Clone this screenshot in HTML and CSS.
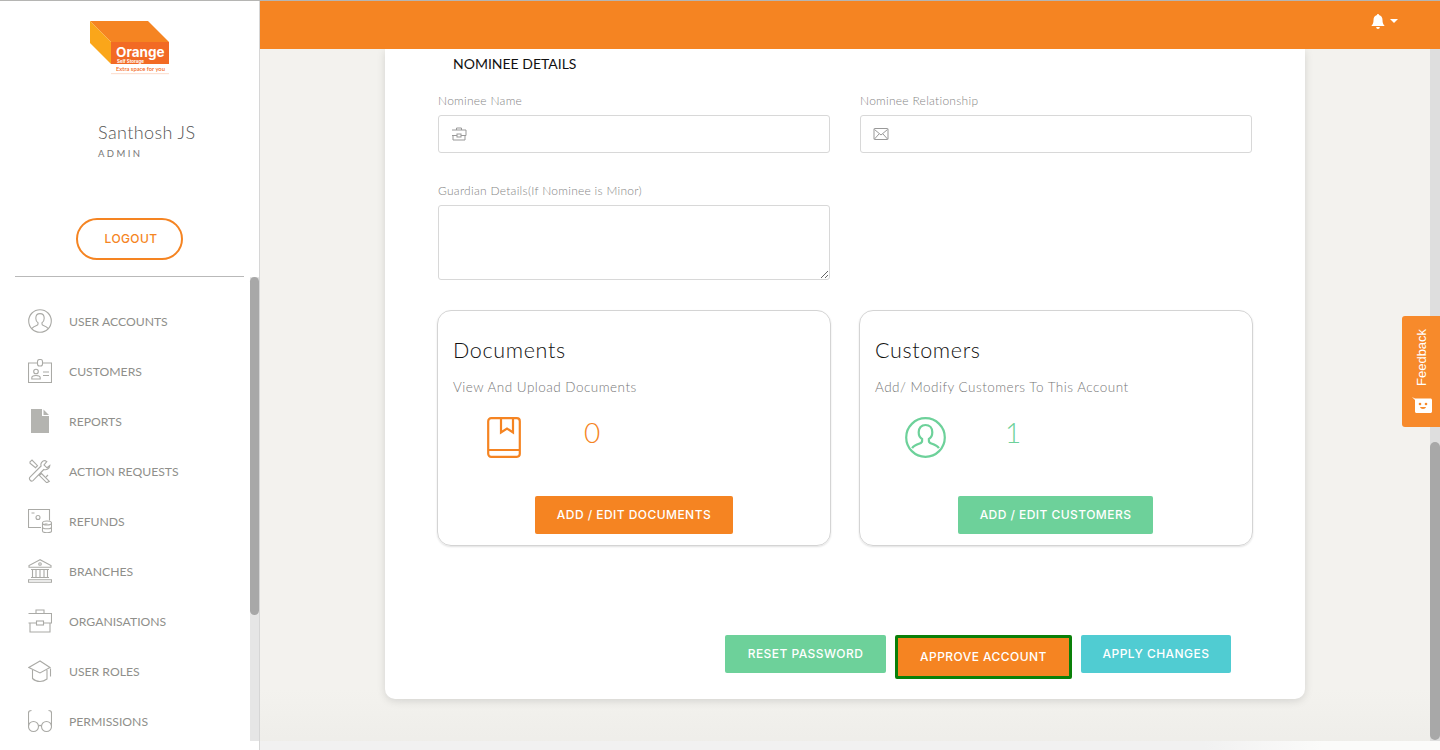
FILE: index.html
```html
<!DOCTYPE html>
<html lang="en">
<head>
<meta charset="utf-8">
<title>Nominee Details</title>
<link rel="stylesheet" href="styles.css">
</head>
<body>
<div class="app">
  <aside class="sidebar">
    <div class="logo">
      <svg width="80" height="54" viewBox="0 0 80 54">
        <polygon points="0,0 58,0 79,21 21,21" fill="#f58422"/>
        <polygon points="0,0 21,21 21,43 0,22" fill="#faa61a"/>
        <rect x="21" y="21" width="58" height="22" fill="#f26a24"/>
        <text x="26" y="35.500" class="logo-main">Orange</text>
        <text x="27" y="41.500" class="logo-sub">Self Storage</text>
        <text x="26" y="50" class="logo-tag">Extra space for you</text>
        <rect x="21" y="52.500" width="58" height="0.600" fill="#f9c3a8"/>
      </svg>
    </div>
    <div class="user">
      <div class="user-name">Santhosh JS</div>
      <div class="user-role">ADMIN</div>
    </div>
    <div class="logout-wrap"><a class="logout">LOGOUT</a></div>
    <hr class="side-rule">
    <nav class="menu">
      <a class="menu-item">
        <svg class="mi" viewBox="0 0 24 24"><circle cx="12" cy="12" r="11.300"/><path d="M12 4.600c-2.600 0-4.200 2-4.200 4.600 0 2 .9 3.700 2.200 4.500v1.300c0 .8-.6 1.200-1.400 1.500-1.700.6-3.600 1.400-4.600 2.900M12 4.600c2.600 0 4.200 2 4.200 4.600 0 2-.9 3.700-2.200 4.500v1.300c0 .8.6 1.200 1.400 1.500 1.700.6 3.600 1.400 4.600 2.900"/></svg>
        <span>USER ACCOUNTS</span>
      </a>
      <a class="menu-item">
        <svg class="mi" viewBox="0 0 24 24"><path d="M9 4H.5v19.500h23V4H15"/><rect x="9.500" y=".5" width="5" height="6.500" rx="2"/><circle cx="8" cy="12.500" r="2.300"/><path d="M3.800 20v-1.200c0-1.500 2-2.300 4.200-2.300s4.200.8 4.200 2.300V20zM15 13h6M15 16.500h6"/></svg>
        <span>CUSTOMERS</span>
      </a>
      <a class="menu-item">
        <svg class="mi" viewBox="0 0 24 24"><path class="solid" d="M3 0h11v7h7v17H3zM15.500 0.500 21 6h-5.500z"/></svg>
        <span>REPORTS</span>
      </a>
      <a class="menu-item">
        <svg class="mi" viewBox="0 0 24 24"><path d="M17 1.500c-2.800.2-4.800 2.800-3.900 5.500L2 18.200c-1.500 1.500.7 5 3 3.400L15.800 10.500c2.800 1 5.700-.9 6-3.900L19 8.800l-3-2.800L18.800 2.700zM2 2.800 4 1l5.500 5.700-2 2L2 4.200zM13.500 14.500l7.800 7.800-2.500 1.500-7.500-7.500z"/><path d="M18 18l2-2"/></svg>
        <span>ACTION REQUESTS</span>
      </a>
      <a class="menu-item">
        <svg class="mi" viewBox="0 0 24 24"><path d="M13 18.500H.5V.5h21v11"/><circle cx="10" cy="8.500" r="2"/><path d="M3.500 4h3M16.500 15h3"/><ellipse cx="19" cy="14" rx="4.500" ry="2"/><path d="M14.500 14v8c0 1 2 1.700 4.500 1.700s4.500-.7 4.500-1.700v-8M14.500 18c0 1 2 1.800 4.500 1.800s4.500-.8 4.500-1.800"/></svg>
        <span>REFUNDS</span>
      </a>
      <a class="menu-item">
        <svg class="mi" viewBox="0 0 24 24"><path d="M12 .7 1 6.500v1.800h22V6.500zM3 10.500h18M4.500 10.500v8M8 10.500v8M12 10.500v8M16 10.500v8M19.500 10.500v8M3 18.500h18M.5 20.800h23v2.500H.5z"/><circle cx="12" cy="5" r="1.300"/></svg>
        <span>BRANCHES</span>
      </a>
      <a class="menu-item">
        <svg class="mi" viewBox="0 0 24 24"><path d="M8 4.500V1h8v3.500M.5 4.500h23v9.500h-8M8.500 14H.5zM2 14v9h20v-9"/><rect x="8.500" y="12" width="7" height="4"/></svg>
        <span>ORGANISATIONS</span>
      </a>
      <a class="menu-item">
        <svg class="mi" viewBox="0 0 24 24"><path d="M12 2 .8 8.500 12 14l10-5.500zM4.500 11v8.500c2 2 5 3 7.500 3s5-1 7-2.500v-9M22.500 9.500v8"/></svg>
        <span>USER ROLES</span>
      </a>
      <a class="menu-item">
        <svg class="mi" viewBox="0 0 24 24"><circle cx="5.500" cy="17.500" r="5"/><circle cx="18.500" cy="17.500" r="5"/><path d="M10.500 17c1-.8 2-.8 3 0M.5 17V4c0-1.500 1-2.500 3-2.500M23.500 17V4c0-1.500-1-2.500-3-2.500"/></svg>
        <span>PERMISSIONS</span>
      </a>
    </nav>
    <div class="side-track"><div class="side-thumb"></div></div>
  </aside>

  <div class="content">
    <header class="topbar">
      <svg class="bell" viewBox="0 0 14 15"><path d="M7 0c.7 0 1 .5 1 1.100C10.300 1.600 11.500 3.500 11.500 6c0 3 .7 4.500 2.200 6H.3c1.500-1.500 2.200-3 2.200-6C2.500 3.500 3.700 1.600 6 1.100 6 .5 6.300 0 7 0zM5.200 13h3.600c0 1.200-.8 2-1.800 2s-1.800-.8-1.800-2z"/></svg>
      <span class="caret"></span>
    </header>
    <main class="stage">
      <section class="panel">
        <h2 class="panel-title">NOMINEE DETAILS</h2>
        <div class="fields">
          <div class="field">
            <label class="field-label">Nominee Name</label>
            <div class="input">
              <svg class="input-icon" viewBox="0 0 16 14"><path d="M5.500 3V1h5v2M1 3h14v5.500h-5M6 8.500H1zM2 8.500V13h12V8.500"/><rect x="6" y="7" width="4" height="3"/></svg>
            </div>
          </div>
          <div class="field">
            <label class="field-label">Nominee Relationship</label>
            <div class="input">
              <svg class="input-icon" viewBox="0 0 16 14"><rect x="1" y="1.500" width="14" height="11" rx=".5"/><path d="M1.500 2.500 8 8l6.500-5.500M1.500 12l4.500-5M14.500 12 10 7"/></svg>
            </div>
          </div>
          <div class="field field-wide">
            <label class="field-label">Guardian Details(If Nominee is Minor)</label>
            <textarea class="textarea"></textarea>
          </div>
        </div>
        <div class="tiles">
          <article class="tile">
            <h3 class="tile-title">Documents</h3>
            <p class="tile-sub">View And Upload Documents</p>
            <div class="tile-stat tile-stat-doc">
              <svg class="tile-icon icon-orange" viewBox="0 0 34 41"><rect x="1.200" y="1.200" width="31.600" height="38.600" rx="3"/><path d="M1.200 33h31.600M14 1.200V15.500l6-4 6 4V1.200"/></svg>
              <span class="count count-orange">0</span>
            </div>
            <div class="tile-action"><a class="btn btn-orange btn-doc">ADD / EDIT DOCUMENTS</a></div>
          </article>
          <article class="tile">
            <h3 class="tile-title">Customers</h3>
            <p class="tile-sub">Add/ Modify Customers To This Account</p>
            <div class="tile-stat tile-stat-cust">
              <svg class="tile-icon icon-green" viewBox="0 0 41 41"><circle cx="20.500" cy="20.500" r="19.300"/><path d="M20.500 8c-4.200 0-6.800 3.200-6.800 7.200 0 3 1.400 5.600 3.400 6.800v2c0 1.300-1 2-2.400 2.500-3 1-6 2.200-7.600 4.600M20.500 8c4.200 0 6.800 3.200 6.800 7.200 0 3-1.400 5.600-3.400 6.800v2c0 1.300 1 2 2.400 2.500 3 1 6 2.200 7.600 4.600"/></svg>
              <span class="count count-green">1</span>
            </div>
            <div class="tile-action"><a class="btn btn-orange-text btn-green btn-cust">ADD / EDIT CUSTOMERS</a></div>
          </article>
        </div>
        <div class="actions">
          <a class="btn btn-green btn-reset">RESET PASSWORD</a>
          <a class="btn btn-orange btn-approve">APPROVE ACCOUNT</a>
          <a class="btn btn-teal btn-apply">APPLY CHANGES</a>
        </div>
      </section>
    </main>
    <div class="hbar"></div>
  </div>

  <div class="vtrack"><div class="vthumb"></div></div>
  <div class="feedback">
    <span class="feedback-text">Feedback</span>
    <svg class="feedback-icon" viewBox="0 0 20 16"><path d="M0 0 3 1.500h15.500c.8 0 1.500.7 1.500 1.500v11.500c0 .8-.7 1.500-1.500 1.500h-14c-.8 0-1.500-.7-1.500-1.500V3z"/><circle cx="8" cy="7" r="1.300" class="face"/><circle cx="14" cy="7" r="1.300" class="face"/><path d="M8 10h6c-.5 2.500-5.500 2.500-6 0z" class="face"/></svg>
  </div>
</div>
</body>
</html>
```

FILE: styles.css
```css
* { box-sizing: border-box; }
html, body { margin: 0; height: 100%; overflow: hidden; }
body { font-family: "Lato", "Liberation Sans", sans-serif; background: #f3f2ee; color: #333; }

.app { position: relative; display: flex; width: 1440px; height: 750px; overflow: hidden; border-top: 1px solid #b5b5b3; }

/* sidebar */
.sidebar { position: relative; flex: 0 0 260px; background: #fff; border-right: 1px solid #d6d6d6; display: flex; flex-direction: column; padding-top: 20px; }
.logo { display: flex; padding-left: 90px; height: 54px; }
.logo-main { font: 700 13.500px "Inter", "Liberation Sans", sans-serif; fill: #fff; }
.logo-sub { font: 700 4.500px "Inter", "Liberation Sans", sans-serif; fill: #fff; }
.logo-tag { font: 600 5.800px "Lato", "Liberation Sans", sans-serif; fill: #f26a24; }
.user { padding: 46px 0 0 98px; }
.user-name { font-size: 18px; font-weight: 300; line-height: 22px; letter-spacing: .4px; color: #555; }
.user-role { margin-top: 5px; font-size: 9.500px; line-height: 12px; letter-spacing: 2.400px; color: #777; }
.logout-wrap { padding: 58px 0 0 76px; }
.logout { display: flex; align-items: center; justify-content: center; width: 107px; height: 42px; padding: 0 0 1px 3px; border: 2px solid #f58422; border-radius: 21px; color: #f58422; font: 500 12px "Inter", "Liberation Sans", sans-serif; letter-spacing: .4px; }
.side-rule { width: 229px; height: 1px; margin: 16px 0 0 15px; border: 0; background: #b9b9b9; }
.menu { display: flex; flex-direction: column; padding: 19px 0 0 28px; }
.menu-item { display: flex; align-items: center; gap: 17px; height: 50px; color: #8f8f8b; font-size: 12.200px; flex: none; }
.mi { width: 24px; height: 24px; fill: none; stroke: #aaaaa6; stroke-width: 1.100; flex: none; }
.mi .solid { fill: #b4b4b0; stroke: none; }
.side-track { position: absolute; top: 276px; right: 0; bottom: 9px; width: 9px; background: #e6e6e6; }
.side-thumb { height: 338px; background: #a8a8a8; border-radius: 5px; }

/* main column */
.content { flex: 1; display: flex; flex-direction: column; min-width: 0; }
.topbar { flex: 0 0 48px; background: #f58422; display: flex; align-items: flex-start; justify-content: flex-end; gap: 5px; padding: 13px 42px 0 0; position: relative; z-index: 2; }
.bell { width: 14px; height: 15px; fill: #fff; }
.caret { width: 0; height: 0; margin-top: 5px; border-left: 4px solid transparent; border-right: 4px solid transparent; border-top: 4px solid #fff; }
.stage { flex: 1; padding-left: 125px; background: linear-gradient(to bottom, #f3f2ee 640px, #eeede9 100%); }

.panel { width: 920px; height: 650px; background: #fff; border-radius: 0 0 10px 10px; box-shadow: 0 2px 8px rgba(0,0,0,.13); padding: 0 53px; display: flex; flex-direction: column; }
.panel-title { margin: 5px 0 0 15px; font-size: 14px; font-weight: 400; line-height: 20px; color: #111; }

.fields { display: grid; grid-template-columns: 392px 392px; column-gap: 30px; row-gap: 31px; margin-top: 20px; }
.field-wide { grid-column: 1; }
.field-label { display: block; font-size: 12px; font-weight: 300; line-height: 14px; color: #858585; letter-spacing: .27px; margin-bottom: 7px; }
.input { height: 38px; border: 1px solid #d8d8d8; border-radius: 3px; display: flex; align-items: center; padding-left: 12px; background: #fff; }
.input-icon { width: 16px; height: 14px; fill: none; stroke: #999; stroke-width: 1; }
.textarea { display: block; width: 392px; height: 75px; border: 1px solid #d8d8d8; border-radius: 3px; background: #fff; margin: 0; padding: 6px; outline: none; }

.tiles { display: flex; gap: 28px; margin: 30px 0 0 -1px; }
.tile { flex: none; width: 394px; height: 236px; border: 1px solid #d4d4d4; border-radius: 14px; box-shadow: 0 1px 2px rgba(0,0,0,.12); padding: 24px 15px 0; display: flex; flex-direction: column; }
.tile-title { margin: 0; font-size: 21.500px; font-weight: 300; line-height: 30px; color: #111; letter-spacing: .65px; }
.tile-sub { margin: 13px 0 0; font-size: 13.500px; font-weight: 300; line-height: 18px; color: #777; letter-spacing: .48px; }
.tile-stat { display: flex; align-items: flex-start; height: 41px; margin-top: 21px; }
.tile-stat-doc { padding-left: 34px; gap: 63px; }
.tile-stat-cust { padding-left: 30px; gap: 59px; }
.tile-icon { fill: none; stroke-width: 2.200; flex: none; }
.icon-orange { width: 34px; height: 41px; stroke: #f58422; }
.icon-green { width: 41px; height: 41px; stroke: #6dd19a; }
.count { font-size: 28px; font-weight: 300; line-height: 34px; margin-top: -2px; }
.count-orange { color: #f58422; }
.count-green { color: #6dd19a; }
.tile-action { display: flex; margin-top: 38px; }
.btn { display: flex; align-items: center; justify-content: center; height: 38px; padding-bottom: 2px; border-radius: 2px; color: #fff; font: 500 12px "Inter", "Liberation Sans", sans-serif; letter-spacing: .45px; flex: none; }
.btn-orange { background: #f58422; }
.btn-green { background: #6dd19a; }
.btn-teal { background: #50ccd2; }
.btn-doc { width: 198px; margin-left: 82px; }
.btn-cust { width: 195px; margin-left: 83px; }

.actions { display: flex; align-items: flex-start; gap: 9px; margin: 89px 0 0 287px; }
.btn-reset { width: 161px; }
.btn-approve { width: 177px; height: 44px; border: 3px solid #0a8009; padding-bottom: 1px; }
.btn-apply { width: 150px; }

.hbar { flex: 0 0 9px; background: linear-gradient(to right, #f1f1f1 80%, #fbfbfa 90%); position: relative; z-index: 1; margin-top: -9px; }

/* overlays */
.vtrack { position: absolute; top: 48px; right: 0; bottom: 0; width: 10px; background: #dedede; }
.vthumb { height: 298px; margin-top: 393px; background: #a8a8a8; border-radius: 5px; }
.feedback { position: absolute; top: 315px; right: 0; width: 38px; height: 111px; background: #f78a2b; border-radius: 3px 0 0 3px; display: flex; flex-direction: column; align-items: center; padding: 12px 0 0 1px; }
.feedback-text { writing-mode: vertical-rl; transform: rotate(180deg); font: 400 13px "Liberation Sans", sans-serif; color: #fff; line-height: 16px; height: 58px; }
.feedback-icon { width: 20px; height: 16px; margin-top: 11px; fill: #fff; }
.feedback-icon .face { fill: #f78a2b; }
```
